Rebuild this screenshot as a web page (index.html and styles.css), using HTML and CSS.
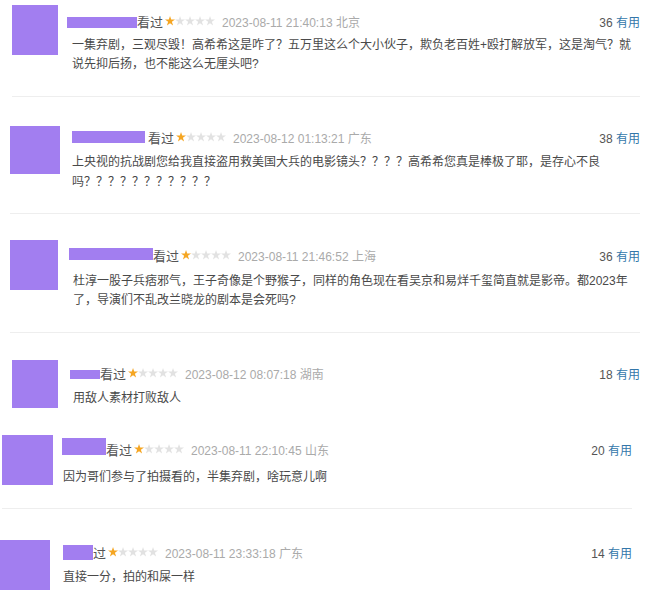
FILE: index.html
```html
<!DOCTYPE html>
<html lang="zh-CN">
<head>
    <meta charset="UTF-8">
    <meta name="viewport" content="width=device-width, initial-scale=1.0">
    <title>短评</title>
    <link rel="stylesheet" href="styles.css">
</head>
<body>
    <div class="list">
        <div class="review r1 sep">
            <div class="avatar"></div>
            <div class="body">
                <div class="head">
                    <span class="name"></span>
                    <span class="watched">看过</span>
                    <span class="stars"><i class="on"></i><i></i><i></i><i></i><i></i></span>
                    <span class="time">2023-08-11 21:40:13 北京</span>
                    <span class="votes">36 <em>有用</em></span>
                </div>
                <p class="text">一集弃剧，三观尽毁！高希希这是咋了？五万里这么个大小伙子，欺负老百姓+殴打解放军，这是淘气？就<br>说先抑后扬，也不能这么无厘头吧?</p>
            </div>
        </div>

        <div class="review r2 sep">
            <div class="avatar"></div>
            <div class="body">
                <div class="head">
                    <span class="name"></span>
                    <span class="watched">看过</span>
                    <span class="stars"><i class="on"></i><i></i><i></i><i></i><i></i></span>
                    <span class="time">2023-08-12 01:13:21 广东</span>
                    <span class="votes">38 <em>有用</em></span>
                </div>
                <p class="text">上央视的抗战剧您给我直接盗用救美国大兵的电影镜头？？？？高希希您真是棒极了耶，是存心不良<br>吗？？？？？？？？？？？</p>
            </div>
        </div>

        <div class="review r3 sep">
            <div class="avatar"></div>
            <div class="body">
                <div class="head">
                    <span class="name"></span>
                    <span class="watched">看过</span>
                    <span class="stars"><i class="on"></i><i></i><i></i><i></i><i></i></span>
                    <span class="time">2023-08-11 21:46:52 上海</span>
                    <span class="votes">36 <em>有用</em></span>
                </div>
                <p class="text">杜淳一股子兵痞邪气，王子奇像是个野猴子，同样的角色现在看吴京和易烊千玺简直就是影帝。都2023年<br>了，导演们不乱改兰晓龙的剧本是会死吗?</p>
            </div>
        </div>

        <div class="review r4">
            <div class="avatar"></div>
            <div class="body">
                <div class="head">
                    <span class="name"></span>
                    <span class="watched">看过</span>
                    <span class="stars"><i class="on"></i><i></i><i></i><i></i><i></i></span>
                    <span class="time">2023-08-12 08:07:18 湖南</span>
                    <span class="votes">18 <em>有用</em></span>
                </div>
                <p class="text">用敌人素材打败敌人</p>
            </div>
        </div>

        <div class="review r5 sep">
            <div class="avatar"></div>
            <div class="body">
                <div class="head">
                    <span class="name"></span>
                    <span class="watched">看过</span>
                    <span class="stars"><i class="on"></i><i></i><i></i><i></i><i></i></span>
                    <span class="time">2023-08-11 22:10:45 山东</span>
                    <span class="votes">20 <em>有用</em></span>
                </div>
                <p class="text">因为哥们参与了拍摄看的，半集弃剧，啥玩意儿啊</p>
            </div>
        </div>

        <div class="review r6">
            <div class="avatar"></div>
            <div class="body">
                <div class="head">
                    <span class="name"></span>
                    <span class="watched">过</span>
                    <span class="stars"><i class="on"></i><i></i><i></i><i></i><i></i></span>
                    <span class="time">2023-08-11 23:33:18 广东</span>
                    <span class="votes">14 <em>有用</em></span>
                </div>
                <p class="text">直接一分，拍的和屎一样</p>
            </div>
        </div>
    </div>
</body>
</html>
```

FILE: styles.css
```css
body {
    margin: 0;
    background: #fff;
    font-family: "Liberation Sans", "Noto Sans CJK SC", sans-serif;
    font-size: 12px;
    color: #494949;
}
.list {
    width: 660px;
    padding-top: 5px;
}
.review {
    display: flex;
    align-items: flex-start;
}
.review.sep {
    border-bottom: 1px solid #eee;
}
.avatar {
    flex: none;
    width: 48px;
    height: 50px;
    background: #a27ef0;
}
.body {
    flex: 1;
    min-width: 0;
}
.head {
    display: flex;
    align-items: center;
    height: 20px;
    white-space: nowrap;
}
.name {
    display: inline-block;
    height: 12px;
    background: #a27ef0;
}
.watched {
    font-size: 13px;
    color: #555;
    margin-right: 2px;
}
.stars {
    display: flex;
    margin-right: 7px;
}
.stars i {
    width: 10px;
    height: 10px;
    background: #e2e2e2;
    clip-path: polygon(50% 0, 62% 36%, 100% 36%, 69% 58%, 81% 95%, 50% 72%, 19% 95%, 31% 58%, 0 36%, 38% 36%);
}
.stars i.on {
    background: #f5a623;
}
.time {
    color: #aaa;
}
.votes {
    margin-left: auto;
    color: #555;
}
.votes em {
    font-style: normal;
    color: #3377aa;
}
.text {
    margin: 5px 0 0;
    line-height: 20px;
    white-space: nowrap;
}

/* each snippet was cut at a slightly different offset */
.r1 { margin: 0 20px 0 12px; padding-bottom: 22px; }
.r1 .avatar { width: 46px; }
.r1 .body { margin-left: 9px; padding-top: 6px; }
.r1 .name { width: 70px; height: 11px; margin-top: 3px; }
.r1 .text { padding-left: 5px; line-height: 19px; }

.r2 { margin: 29px 20px 0 10px; padding-bottom: 21px; }
.r2 .avatar { width: 50px; height: 48px; }
.r2 .body { margin-left: 12px; padding-top: 1px; }
.r2 .name { width: 73px; margin-right: 3px; }

.r3 { margin: 26px 20px 0 10px; padding-bottom: 22px; }
.r3 .body { margin-left: 11px; padding-top: 5px; }
.r3 .name { width: 84px; margin-top: -2px; }
.r3 .text { margin-top: 7px; padding-left: 4px; line-height: 19px; }

.r4 { margin: 27px 20px 0 12px; }
.r4 .avatar { width: 46px; height: 48px; }
.r4 .body { margin-left: 12px; padding-top: 3px; }
.r4 .name { width: 30px; height: 9px; margin-top: 3px; }
.r4 .text { padding-left: 3px; }

.r5 { margin: 27px 28px 0 2px; padding-bottom: 21px; }
.r5 .avatar { width: 51px; }
.r5 .body { margin-left: 9px; padding-top: 4px; }
.r5 .name { width: 44px; height: 17px; margin-top: -5px; }
.r5 .text { margin-top: 8px; padding-left: 1px; }

.r6 { margin: 31px 28px 0 0; }
.r6 .avatar { width: 50px; }
.r6 .body { margin-left: 13px; padding-top: 2px; }
.r6 .name { width: 30px; height: 15px; }
```
